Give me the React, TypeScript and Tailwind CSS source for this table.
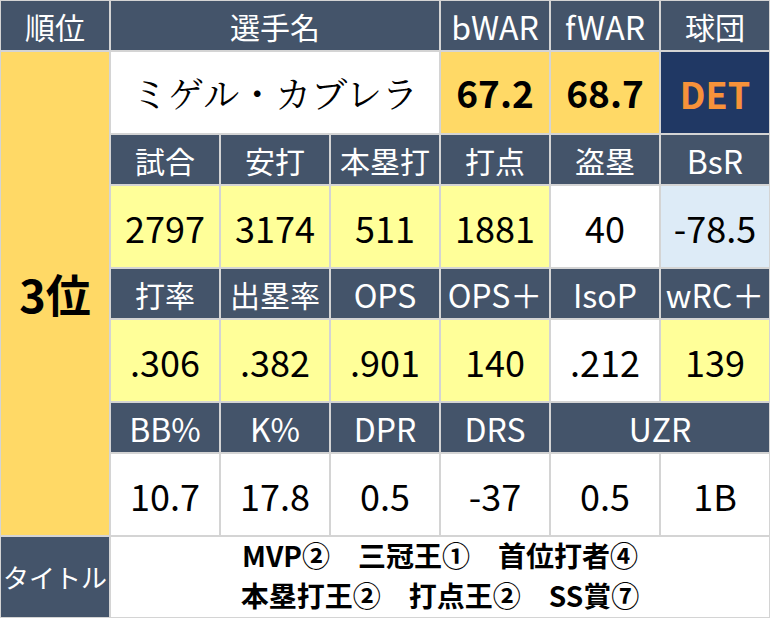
import React from 'react';

const font = { fontFamily: '"Noto Sans CJK JP", "Noto Sans", sans-serif' };

type Cell = { text: string; bg: string; span?: string };

function Head({ text, span = '' }: { text: string; span?: string }) {
    // latin labels render a bit larger in the original sheet font
    const latin = /^[A-Za-z%＋]+$/.test(text);
    return (
        <div
            className={`bg-[#44546a] text-white leading-none whitespace-nowrap flex items-center justify-center ${latin ? 'text-[32px]' : 'text-[30px]'} ${span}`}
        >
            {text}
        </div>
    );
}

function Value({ text, bg }: Cell) {
    return (
        <div className={`${bg} text-black text-[36px] leading-none flex items-center justify-center`}>
            {text}
        </div>
    );
}

const Y = 'bg-[#ffff99]';
const W = 'bg-white';
const B = 'bg-[#ddebf7]';

export default function App() {
    const rows: { heads: { text: string; span?: string }[]; values: Cell[] }[] = [
        {
            heads: [{ text: '試合' }, { text: '安打' }, { text: '本塁打' }, { text: '打点' }, { text: '盗塁' }, { text: 'BsR' }],
            values: [
                { text: '2797', bg: Y },
                { text: '3174', bg: Y },
                { text: '511', bg: Y },
                { text: '1881', bg: Y },
                { text: '40', bg: W },
                { text: '-78.5', bg: B },
            ],
        },
        {
            heads: [{ text: '打率' }, { text: '出塁率' }, { text: 'OPS' }, { text: 'OPS＋' }, { text: 'IsoP' }, { text: 'wRC＋' }],
            values: [
                { text: '.306', bg: Y },
                { text: '.382', bg: Y },
                { text: '.901', bg: Y },
                { text: '140', bg: Y },
                { text: '.212', bg: W },
                { text: '139', bg: Y },
            ],
        },
        {
            heads: [{ text: 'BB%' }, { text: 'K%' }, { text: 'DPR' }, { text: 'DRS' }, { text: 'UZR', span: 'col-span-2' }],
            values: [
                { text: '10.7', bg: W },
                { text: '17.8', bg: W },
                { text: '0.5', bg: W },
                { text: '-37', bg: W },
                { text: '0.5', bg: W },
                { text: '1B', bg: W },
            ],
        },
    ];

    return (
        <div className="bg-white w-[771px] h-[619px]" style={font}>
            <div className="grid grid-cols-[repeat(7,108px)] grid-rows-[49px_81px_49px_81px_49px_81px_49px_81px_80px] gap-[2px] p-[1px] bg-[#d4d4d4] w-fit">
                {/* header row */}
                <Head text="順位" />
                <Head text="選手名" span="col-span-3" />
                <Head text="bWAR" />
                <Head text="fWAR" />
                <Head text="球団" />

                {/* rank column */}
                <div className="row-span-7 bg-[#ffd966] flex items-center justify-center text-[45px] font-bold leading-none text-black">
                    3位
                </div>

                {/* name row */}
                <div
                    className="col-span-3 bg-white flex items-center justify-center text-[36px] leading-none text-black"
                    style={{ fontFamily: '"Noto Serif CJK JP", "Liberation Serif", "Noto Sans CJK JP", serif' }}
                >
                    ミゲル・カブレラ
                </div>
                <div className="bg-[#ffd966] flex items-center justify-center text-[37px] font-bold leading-none">67.2</div>
                <div className="bg-[#ffd966] flex items-center justify-center text-[37px] font-bold leading-none">68.7</div>
                <div className="bg-[#203864] flex items-center justify-center text-[36px] font-bold leading-none text-[#f7923a]">DET</div>

                {rows.map((r, i) => (
                    <React.Fragment key={i}>
                        {r.heads.map((h, j) => (
                            <Head key={'h' + j} text={h.text} span={h.span} />
                        ))}
                        {r.values.map((v, j) => (
                            <Value key={'v' + j} text={v.text} bg={v.bg} />
                        ))}
                    </React.Fragment>
                ))}

                {/* titles */}
                <Head text="タイトル" span="!text-[26px]" />
                <div className="col-span-6 bg-white flex flex-col items-center justify-center pb-[4px] text-[28px] font-bold leading-[40px] text-black">
                    <div>MVP②　三冠王①　首位打者④</div>
                    <div>本塁打王②　打点王②　SS賞⑦</div>
                </div>
            </div>
        </div>
    );
}
